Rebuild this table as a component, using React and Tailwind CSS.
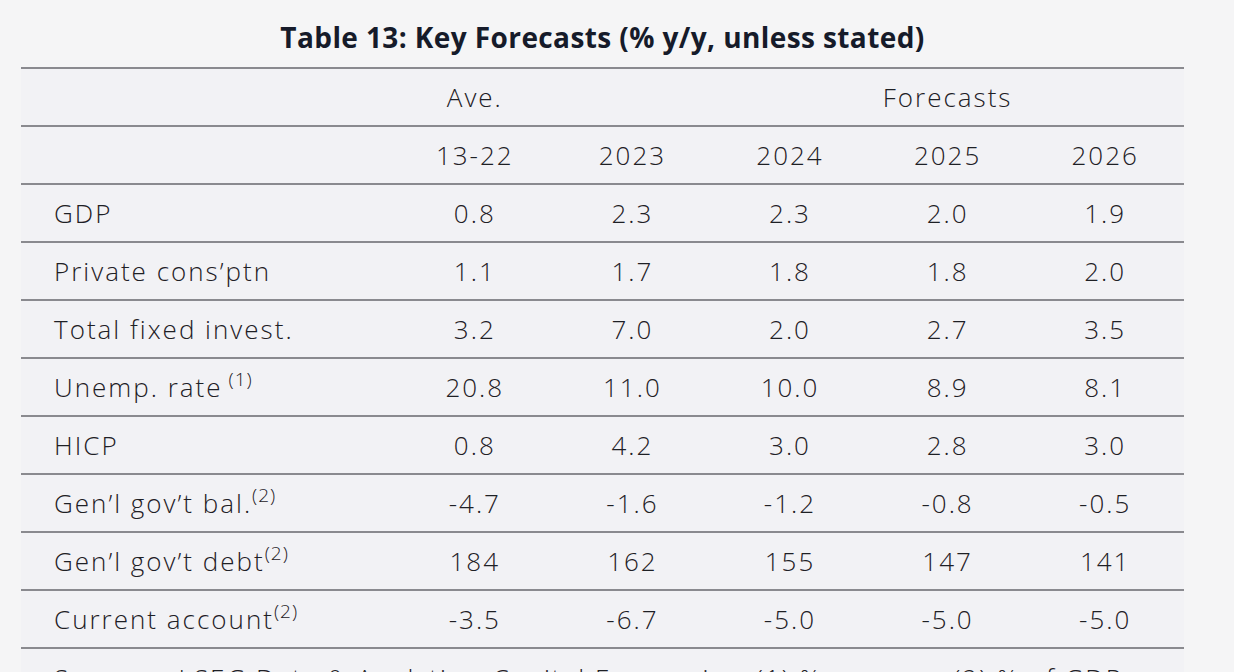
import React from 'react';

const rows = [
  { label: 'GDP', vals: ['0.8', '2.3', '2.3', '2.0', '1.9'] },
  { label: 'Private cons\u2019ptn', vals: ['1.1', '1.7', '1.8', '1.8', '2.0'] },
  { label: 'Total fixed invest.', vals: ['3.2', '7.0', '2.0', '2.7', '3.5'] },
  { label: 'Unemp. rate', sup: '(1)', gap: true, vals: ['20.8', '11.0', '10.0', '8.9', '8.1'] },
  { label: 'HICP', vals: ['0.8', '4.2', '3.0', '2.8', '3.0'] },
  { label: 'Gen\u2019l gov\u2019t bal.', sup: '(2)', vals: ['-4.7', '-1.6', '-1.2', '-0.8', '-0.5'] },
  { label: 'Gen\u2019l gov\u2019t debt', sup: '(2)', vals: ['184', '162', '155', '147', '141'] },
  { label: 'Current account', sup: '(2)', vals: ['-3.5', '-6.7', '-5.0', '-5.0', '-5.0'] },
];

const grid = 'grid grid-cols-[375px_repeat(5,1fr)] h-[58px] items-center border-t-2 border-[#8a8a8f]';

export default function App() {
  return (
    <div className="min-h-screen bg-[#f5f5f6] pl-[21px] text-[#1e2025] font-['Open_Sans',sans-serif] font-light">
      <div className="w-[1163px]">
        {/* title */}
        <div className="h-[67px] flex items-center justify-center pt-[6px]">
          <h1 className="text-[28px] font-bold text-[#161b2a] tracking-[0.4px]">
            Table 13: Key Forecasts (% y/y, unless stated)
          </h1>
        </div>

        <div className="bg-[#f2f2f5] text-[26px] tracking-[2px]">
          <div className={grid}>
            <div />
            <div className="text-center">Ave.</div>
            <div />
            <div className="col-span-3 text-center">Forecasts</div>
          </div>
          <div className={grid}>
            <div />
            {['13-22', '2023', '2024', '2025', '2026'].map((y) => (
              <div key={y} className="text-center">{y}</div>
            ))}
          </div>
          {rows.map((r) => (
            <div key={r.label} className={grid}>
              <div className="pl-[33px]">
                {r.label}
                {r.sup && (
                  <sup className={`text-[19px] tracking-[1px] top-[-0.55em] ${r.gap ? 'ml-[6px]' : ''}`}>{r.sup}</sup>
                )}
              </div>
              {r.vals.map((v, i) => (
                <div key={i} className="text-center">{v}</div>
              ))}
            </div>
          ))}
          <div className="border-t-2 border-[#8a8a8f] pl-[33px] pt-[10px] whitespace-nowrap">
            Sources: LSEG Data &amp; Analytics, Capital Economics. (1) % average, (2) % of GDP
          </div>
        </div>
      </div>
    </div>
  );
}
